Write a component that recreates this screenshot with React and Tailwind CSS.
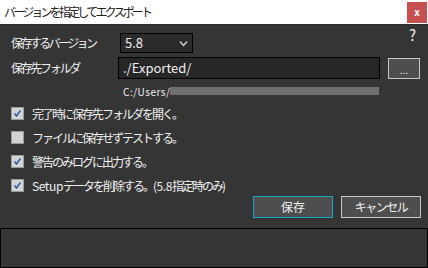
import { useState } from "react";

const font = { fontFamily: '"Noto Sans CJK JP", "Noto Sans", sans-serif' };

// segments: [text, isLatin]
const options = [
  { parts: [["完了時に保存先フォルダを開く。", false]], checked: true },
  { parts: [["ファイルに保存せずテストする。", false]], checked: false },
  { parts: [["警告のみログに出力する。", false]], checked: true },
  {
    parts: [
      ["Setup", true],
      ["データを削除する。", false],
      ["(5.8", true],
      ["指定時のみ", false],
      [")", true],
    ],
    checked: true,
  },
];

const Check = ({ checked }) => (
  <span className="w-[13px] h-[13px] shrink-0 border border-[#9a9a9a] bg-[#d4d4d4] flex items-center justify-center">
    {checked && (
      <svg width="9" height="9" viewBox="0 0 9 9">
        <path d="M1.5 4.5 L3.5 7 L7.5 1.5" stroke="#3a5aa8" strokeWidth="1.6" fill="none" />
      </svg>
    )}
  </span>
);

const App = () => {
  const [checks, setChecks] = useState(options.map((o) => o.checked));

  return (
    <div className="w-[428px] h-[268px] bg-[#353535] flex flex-col text-[#f0f0f0] overflow-hidden" style={font}>
      <div className="h-[25px] bg-white flex items-center justify-between border-b border-[#2a2a2a]">
        <span className="pl-[4px] text-[12px] tracking-[-2.8px] text-[#222]">バージョンを指定してエクスポート</span>
        <span className="w-[20px] h-[21px] mr-[1px] bg-[#c75050] text-white text-[10px] font-bold flex items-center justify-center leading-none">
          x
        </span>
      </div>

      <div className="flex-1 relative pl-[11px] pt-[8px]">
        <span className="absolute right-[12px] top-[2px] text-[15px] leading-none">?</span>

        <div className="flex items-center h-[20px]">
          <span className="w-[109px] shrink-0 text-[12px] tracking-[-2.6px]">保存するバージョン</span>
          <div className="w-[73px] h-[20px] shrink-0 border border-black bg-[#2b2b2b] flex items-center justify-between px-[4px] text-[13px]">
            <span>5.8</span>
            <svg width="9" height="7" viewBox="0 0 9 7">
              <path d="M1 1.5 L4.5 5.5 L8 1.5" stroke="#cfcfcf" strokeWidth="1.4" fill="none" />
            </svg>
          </div>
        </div>

        <div className="flex items-center h-[22px] mt-[4px]">
          <span className="w-[107px] shrink-0 text-[12px] tracking-[-2.3px]">保存先フォルダ</span>
          <div className="w-[262px] h-[22px] shrink-0 border border-black bg-[#262626] flex items-center px-[4px] text-[13px]">
            ./Exported/
          </div>
          <div className="w-[32px] h-[21px] shrink-0 ml-[8px] border border-[#c8c8c8] bg-[#4e4e4e] flex items-center justify-center text-[10px] leading-none pt-[3px]">
            ...
          </div>
        </div>

        <div className="flex items-center h-[16px] mt-[4px] pl-[112px] text-[10px] tracking-[0.5px]">
          <span>C:/Users/</span>
          <span className="w-[209px] h-[8px] bg-[#6f6f6f]" />
        </div>

        <div className="flex flex-col mt-[8px] gap-[11px]">
          {options.map((o, i) => (
            <label
              key={i}
              className="flex items-center gap-[8px] h-[13px] text-[12px]"
              onClick={() => setChecks(checks.map((c, j) => (j === i ? !c : c)))}
            >
              <Check checked={checks[i]} />
              <span>
                {o.parts.map(([t, latin], k) => (
                  <span key={k} className={latin ? "tracking-[-0.4px]" : "tracking-[-2px]"}>
                    {t}
                  </span>
                ))}
              </span>
            </label>
          ))}
        </div>

        <div className="flex justify-end gap-[8px] mt-[4px] pr-[7px]">
          <button className="w-[80px] h-[22px] border border-[#17a6c8] bg-[#4e4e4e] text-[12px]">保存</button>
          <button className="w-[80px] h-[22px] border border-[#c8c8c8] bg-[#4e4e4e] text-[12px] tracking-[-1.5px]">キャンセル</button>
        </div>
      </div>

      <div className="h-[40px] border border-black bg-[#353535]" />
    </div>
  );
};

export default App;
